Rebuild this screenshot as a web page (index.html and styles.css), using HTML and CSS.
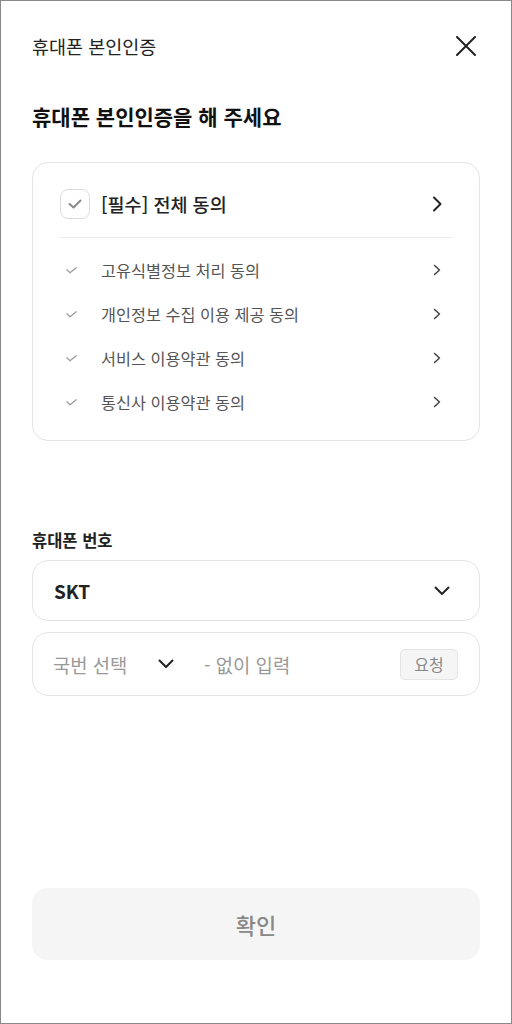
FILE: index.html
```html
<!DOCTYPE html>
<html lang="ko">
<head>
<meta charset="utf-8">
<title>휴대폰 본인인증</title>
<link rel="stylesheet" href="styles.css">
</head>
<body>
<div class="page">
  <header class="header">
    <h1 class="header-title">휴대폰 본인인증</h1>
    <svg class="close" width="20" height="20" viewBox="0 0 20 20"><path d="M1 1 L19 19 M19 1 L1 19" stroke="#222" stroke-width="2" fill="none" stroke-linecap="round"/></svg>
  </header>

  <h2 class="heading">휴대폰 본인인증을 해 주세요</h2>

  <section class="terms">
    <div class="all-row">
      <span class="checkbox"><svg width="14" height="10" viewBox="0 0 14 10"><path d="M1.5 5 L5.5 8.5 L12.5 1.5" stroke="#8a8a8a" stroke-width="2" fill="none" stroke-linecap="round" stroke-linejoin="round"/></svg></span>
      <span class="all-label">[필수] 전체 동의</span>
      <svg class="chev" width="16" height="16" viewBox="0 0 16 16"><path d="M5 1.5 L11.5 8 L5 14.5" stroke="#222" stroke-width="2" fill="none" stroke-linecap="round" stroke-linejoin="round"/></svg>
    </div>
    <div class="divider"></div>
    <ul class="term-list">
      <li class="term"><svg class="tick" width="11" height="7" viewBox="0 0 11 7"><path d="M0.8 2.6 L4 5.8 L10.2 0.8" stroke="#9a9a9a" stroke-width="1.3" fill="none" stroke-linecap="round" stroke-linejoin="round"/></svg><span class="term-label">고유식별정보 처리 동의</span><svg class="chev" width="16" height="16" viewBox="0 0 16 16"><path d="M5.5 3.5 L10.5 8 L5.5 12.5" stroke="#444" stroke-width="1.5" fill="none" stroke-linecap="round" stroke-linejoin="round"/></svg></li>
      <li class="term"><svg class="tick" width="11" height="7" viewBox="0 0 11 7"><path d="M0.8 2.6 L4 5.8 L10.2 0.8" stroke="#9a9a9a" stroke-width="1.3" fill="none" stroke-linecap="round" stroke-linejoin="round"/></svg><span class="term-label">개인정보 수집 이용 제공 동의</span><svg class="chev" width="16" height="16" viewBox="0 0 16 16"><path d="M5.5 3.5 L10.5 8 L5.5 12.5" stroke="#444" stroke-width="1.5" fill="none" stroke-linecap="round" stroke-linejoin="round"/></svg></li>
      <li class="term"><svg class="tick" width="11" height="7" viewBox="0 0 11 7"><path d="M0.8 2.6 L4 5.8 L10.2 0.8" stroke="#9a9a9a" stroke-width="1.3" fill="none" stroke-linecap="round" stroke-linejoin="round"/></svg><span class="term-label">서비스 이용약관 동의</span><svg class="chev" width="16" height="16" viewBox="0 0 16 16"><path d="M5.5 3.5 L10.5 8 L5.5 12.5" stroke="#444" stroke-width="1.5" fill="none" stroke-linecap="round" stroke-linejoin="round"/></svg></li>
      <li class="term"><svg class="tick" width="11" height="7" viewBox="0 0 11 7"><path d="M0.8 2.6 L4 5.8 L10.2 0.8" stroke="#9a9a9a" stroke-width="1.3" fill="none" stroke-linecap="round" stroke-linejoin="round"/></svg><span class="term-label">통신사 이용약관 동의</span><svg class="chev" width="16" height="16" viewBox="0 0 16 16"><path d="M5.5 3.5 L10.5 8 L5.5 12.5" stroke="#444" stroke-width="1.5" fill="none" stroke-linecap="round" stroke-linejoin="round"/></svg></li>
    </ul>
  </section>

  <div class="field-label">휴대폰 번호</div>
  <div class="select">
    <span class="select-value">SKT</span>
    <svg class="down" width="16" height="10" viewBox="0 0 16 10"><path d="M1.5 1.5 L8 8 L14.5 1.5" stroke="#222" stroke-width="2" fill="none" stroke-linecap="round" stroke-linejoin="round"/></svg>
  </div>
  <div class="phone">
    <span class="prefix">국번 선택</span>
    <svg class="down-sm" width="16" height="10" viewBox="0 0 16 10"><path d="M1.5 1.5 L8 8 L14.5 1.5" stroke="#222" stroke-width="2" fill="none" stroke-linecap="round" stroke-linejoin="round"/></svg>
    <span class="number">- 없이 입력</span>
    <span class="request">요청</span>
  </div>

  <div class="confirm">확인</div>
</div>
</body>
</html>
```
FILE: styles.css
```css
* { box-sizing: border-box; }
html, body { margin: 0; padding: 0; }
body {
  font-family: "Noto Sans CJK KR", "Noto Sans", sans-serif;
  color: #222;
  background: #fff;
}
.page {
  width: 512px;
  height: 1024px;
  border: 1px solid #8a8a8a;
  padding: 0 31px;
  display: flex;
  flex-direction: column;
}
.header {
  height: 90px;
  display: flex;
  align-items: center;
  justify-content: space-between;
}
.header-title {
  margin: 0;
  font-size: 18.5px;
  font-weight: 400;
  color: #222;
  line-height: 24px;
}
.close { margin-right: 4px; }
.heading {
  margin: 10px 0 0;
  font-size: 21px;
  font-weight: 700;
  line-height: 30px;
  color: #111;
}
.terms {
  margin-top: 31px;
  border: 1px solid #e4e4e4;
  border-radius: 16px;
  padding: 26px 26px 16px;
}
.all-row {
  height: 30px;
  display: flex;
  align-items: center;
}
.checkbox {
  width: 30px;
  height: 30px;
  margin-left: 1px;
  border: 1px solid #dcdcdc;
  border-radius: 8px;
  display: flex;
  align-items: center;
  justify-content: center;
}
.all-label {
  margin-left: 11px;
  font-size: 18.5px;
  font-weight: 500;
  color: #222;
  flex: 1;
}
.chev { margin-right: 8px; flex: none; }
.divider {
  margin-top: 18px;
  height: 1px;
  background: #ececec;
}
.term-list {
  list-style: none;
  margin: 10px 0 0;
  padding: 0;
}
.term {
  height: 44px;
  display: flex;
  align-items: center;
}
.tick { margin-left: 7px; margin-right: 24px; flex: none; }
.term-label {
  flex: 1;
  font-size: 16.3px;
  color: #555;
}
.field-label {
  margin-top: 88px;
  font-size: 16.5px;
  font-weight: 700;
  line-height: 22px;
  color: #222;
}
.select {
  margin-top: 9px;
  height: 61px;
  border: 1px solid #e4e4e4;
  border-radius: 16px;
  display: flex;
  align-items: center;
  justify-content: space-between;
  padding: 0 29px 0 21px;
}
.select-value {
  font-size: 19px;
  font-weight: 700;
  color: #222;
}
.phone {
  margin-top: 11px;
  height: 64px;
  border: 1px solid #e4e4e4;
  border-radius: 16px;
  display: flex;
  align-items: center;
  padding: 0 21px 0 20px;
}
.prefix {
  width: 105px;
  font-size: 18.8px;
  color: #999;
}
.down-sm { flex: none; }
.number {
  margin-left: 30px;
  font-size: 18.8px;
  color: #999;
}
.request {
  margin-left: auto;
  width: 58px;
  height: 31px;
  border: 1px solid #e4e4e4;
  border-radius: 5px;
  background: #f5f5f5;
  color: #888;
  font-size: 16px;
  display: flex;
  align-items: center;
  justify-content: center;
}
.confirm {
  margin-top: auto;
  margin-bottom: 63px;
  height: 72px;
  border-radius: 16px;
  background: #f5f5f5;
  color: #888;
  font-size: 22px;
  font-weight: 500;
  display: flex;
  align-items: center;
  justify-content: center;
}
```
